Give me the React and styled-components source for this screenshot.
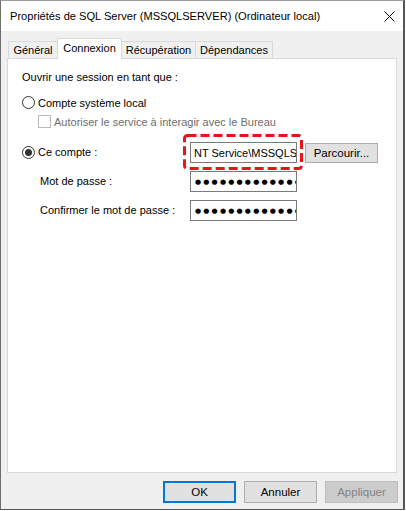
import React from 'react';
import styled, { createGlobalStyle } from 'styled-components';

const GlobalStyle = createGlobalStyle`
  html, body { margin: 0; padding: 0; background: #fff; }
  body {
    font-family: "Liberation Sans", Arial, sans-serif;
    font-size: 11px;
    color: #000;
  }
  * { box-sizing: border-box; }
`;

const Window = styled.div`
  width: 405px;
  height: 510px;
  border-top: 1px solid #9c9c9c;
  border-left: 1px solid #6e6e6e;
  border-right: 2px solid #555;
  border-bottom: 1px solid #555;
  background: #f0f0f0;
  display: flex;
  flex-direction: column;
`;

const TitleBar = styled.div`
  height: 30px;
  flex: none;
  background: #fff;
  display: flex;
  align-items: center;
  justify-content: space-between;
  padding: 0 8px 0 9px;
  font-size: 11.1px;
`;

const CloseIcon = styled.svg`
  width: 11px;
  height: 11px;
`;

const Body = styled.div`
  flex: 1;
  display: flex;
  flex-direction: column;
  padding: 7px 6px 0 6px;
`;

const TabList = styled.div`
  display: flex;
  align-items: flex-end;
  height: 20px;
  padding-left: 1px;
  position: relative;
  z-index: 1;
`;

const Tab = styled.div`
  width: ${p => p.$w}px;
  height: ${p => (p.$active ? 21 : 17)}px;
  margin-bottom: ${p => (p.$active ? -1 : 0)}px;
  background: ${p => (p.$active ? '#fff' : '#f0f0f0')};
  border: 1px solid #d9d9d9;
  border-bottom: none;
  margin-left: ${p => (p.$first ? 0 : -1)}px;
  display: flex;
  align-items: center;
  justify-content: center;
  padding-bottom: ${p => (p.$active ? 2 : 0)}px;
  white-space: nowrap;
`;

const Panel = styled.div`
  height: 415px;
  flex: none;
  background: #fff;
  border: 1px solid #d9d9d9;
  padding: 11px 0 0 14px;
  display: flex;
  flex-direction: column;
`;

const Heading = styled.div`
  line-height: 15px;
`;

const OptionRow = styled.label`
  display: flex;
  align-items: center;
  height: 15px;
  margin-top: ${p => p.$mt}px;
  margin-left: ${p => p.$ml || 0}px;
  color: ${p => (p.$disabled ? '#6d6d6d' : '#000')};
  gap: 3px;
`;

const Radio = styled.span`
  width: 13px;
  height: 13px;
  border-radius: 50%;
  border: 1px solid #333;
  background: #fff;
  display: flex;
  align-items: center;
  justify-content: center;
  flex: none;
  &::after {
    content: '';
    display: ${p => (p.$checked ? 'block' : 'none')};
    width: 7px;
    height: 7px;
    border-radius: 50%;
    background: #333;
  }
`;

const Check = styled.span`
  width: 13px;
  height: 13px;
  border: 1px solid #bcbcbc;
  background: #fff;
  flex: none;
`;

const AccountGrid = styled.div`
  display: grid;
  grid-template-columns: 168px 107px auto;
  grid-auto-rows: 21px;
  row-gap: 8px;
  margin-top: 13px;
  align-items: center;
`;

const FieldLabel = styled.div`
  padding-left: ${p => p.$indent || 0}px;
  display: flex;
  align-items: center;
  gap: 3px;
  line-height: 15px;
`;

const FieldWrap = styled.div`
  position: relative;
  height: 21px;
`;

const TextInput = styled.input`
  display: block;
  width: 107px;
  height: 21px;
  margin: 0;
  border: 1px solid #7a7a7a;
  border-radius: 0;
  background: #fff;
  padding: 0 0 0 3px;
  font-family: "Liberation Sans", Arial, sans-serif;
  font-size: 11px;
  color: #000;
  outline: none;
`;

const Field = styled.div`
  height: 21px;
  border: 1px solid #7a7a7a;
  background: #fff;
  padding-left: 4px;
  display: flex;
  align-items: center;
  overflow: hidden;
  white-space: nowrap;
`;

const Dots = styled.span`
  font-family: "DejaVu Sans", sans-serif;
  font-size: 7px;
  letter-spacing: 2.2px;
`;

const Highlight = styled.svg`
  position: absolute;
  left: -7px;
  top: -8px;
  width: 120px;
  height: 36px;
  pointer-events: none;
`;

const Button = styled.div`
  width: 73px;
  height: ${p => p.$h || 22}px;
  background: ${p => (p.$disabled ? '#cccccc' : '#e1e1e1')};
  border: ${p => (p.$default ? '2px solid #0078d7' : p.$disabled ? '1px solid #bfbfbf' : '1px solid #adadad')};
  color: ${p => (p.$disabled ? '#838383' : '#000')};
  display: flex;
  align-items: center;
  justify-content: center;
  margin-left: ${p => p.$ml || 0}px;
  justify-self: start;
  font-size: 11.5px;
`;

const Footer = styled.div`
  display: flex;
  justify-content: flex-end;
  gap: 8px;
  padding-top: 8px;
  margin-right: -1px;
`;

export default function App() {
  return (
    <>
      <GlobalStyle />
      <Window>
        <TitleBar>
          <span>Propriétés de SQL Server (MSSQLSERVER) (Ordinateur local)</span>
          <CloseIcon viewBox="0 0 11 11">
            <path d="M0.5 0.5 L10.5 10.5 M10.5 0.5 L0.5 10.5" stroke="#000" strokeWidth="1" fill="none" />
          </CloseIcon>
        </TitleBar>
        <Body>
          <TabList>
            <Tab $w={50} $first>Général</Tab>
            <Tab $w={65} $active>Connexion</Tab>
            <Tab $w={75}>Récupération</Tab>
            <Tab $w={78}>Dépendances</Tab>
          </TabList>
          <Panel>
            <Heading>Ouvrir une session en tant que :</Heading>
            <OptionRow $mt={10}>
              <Radio />
              Compte système local
            </OptionRow>
            <OptionRow $mt={4} $ml={16} $disabled>
              <Check />
              Autoriser le service à interagir avec le Bureau
            </OptionRow>
            <AccountGrid>
              <FieldLabel>
                <Radio $checked />
                Ce compte :
              </FieldLabel>
              <FieldWrap>
                <TextInput readOnly value="NT Service\MSSQLSERVER" />
                <Highlight viewBox="0 0 120 36">
                  <rect x="1.5" y="1.5" width="117" height="33" rx="3" ry="3" fill="none" stroke="#e8141c" strokeWidth="3" strokeDasharray="9 4" />
                </Highlight>
              </FieldWrap>
              <Button $ml={8} $h={20}>Parcourir...</Button>
              <FieldLabel $indent={18}>Mot de passe :</FieldLabel>
              <Field><Dots>●●●●●●●●●●●●●●●</Dots></Field>
              <span />
              <FieldLabel $indent={18}>Confirmer le mot de passe :</FieldLabel>
              <Field><Dots>●●●●●●●●●●●●●●●</Dots></Field>
              <span />
            </AccountGrid>
          </Panel>
          <Footer>
            <Button $default>OK</Button>
            <Button>Annuler</Button>
            <Button $disabled>Appliquer</Button>
          </Footer>
        </Body>
      </Window>
    </>
  );
}
